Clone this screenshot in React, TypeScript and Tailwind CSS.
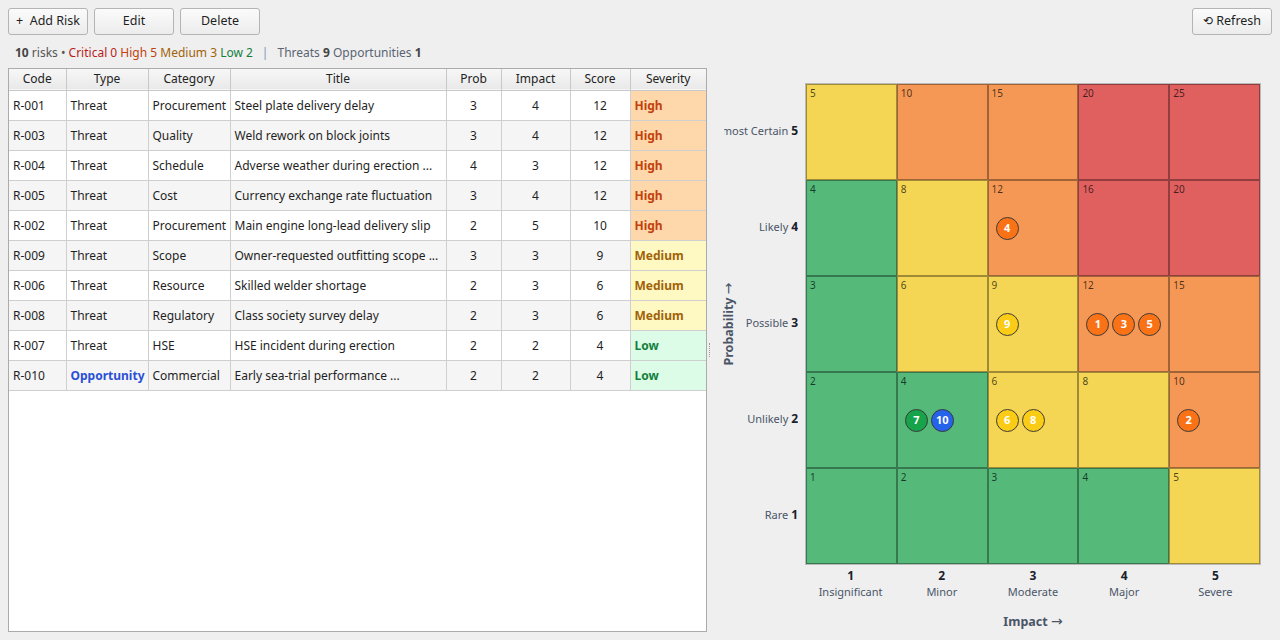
import React from "react";

type Risk = {
  code: string;
  type: "Threat" | "Opportunity";
  category: string;
  title: string;
  prob: number;
  impact: number;
};

const risks: Risk[] = [
  { code: "R-001", type: "Threat", category: "Procurement", title: "Steel plate delivery delay", prob: 3, impact: 4 },
  { code: "R-003", type: "Threat", category: "Quality", title: "Weld rework on block joints", prob: 3, impact: 4 },
  { code: "R-004", type: "Threat", category: "Schedule", title: "Adverse weather during erection ...", prob: 4, impact: 3 },
  { code: "R-005", type: "Threat", category: "Cost", title: "Currency exchange rate fluctuation", prob: 3, impact: 4 },
  { code: "R-002", type: "Threat", category: "Procurement", title: "Main engine long-lead delivery slip", prob: 2, impact: 5 },
  { code: "R-009", type: "Threat", category: "Scope", title: "Owner-requested outfitting scope ...", prob: 3, impact: 3 },
  { code: "R-006", type: "Threat", category: "Resource", title: "Skilled welder shortage", prob: 2, impact: 3 },
  { code: "R-008", type: "Threat", category: "Regulatory", title: "Class society survey delay", prob: 2, impact: 3 },
  { code: "R-007", type: "Threat", category: "HSE", title: "HSE incident during erection", prob: 2, impact: 2 },
  { code: "R-010", type: "Opportunity", category: "Commercial", title: "Early sea-trial performance ...", prob: 2, impact: 2 },
];

const severityOf = (score: number) =>
  score >= 16 ? "Critical" : score >= 10 ? "High" : score >= 5 ? "Medium" : "Low";

const severityCell: Record<string, string> = {
  Critical: "bg-[#fecaca] text-[#b91c1c]",
  High: "bg-[#fed7aa] text-[#c2410c]",
  Medium: "bg-[#fef9c3] text-[#a16207]",
  Low: "bg-[#dcfce7] text-[#15803d]",
};

const zoneFill: Record<string, string> = {
  Critical: "bg-[#e06060]",
  High: "bg-[#f59855]",
  Medium: "bg-[#f4d654]",
  Low: "bg-[#55b97a]",
};

const chipFill: Record<string, string> = {
  Critical: "bg-[#dc2626]",
  High: "bg-[#f97316]",
  Medium: "bg-[#facc15]",
  Low: "bg-[#16a34a]",
};

const probLabels = ["Rare", "Unlikely", "Possible", "Likely", "Almost Certain"];
const impactLabels = ["Insignificant", "Minor", "Moderate", "Major", "Severe"];

const btn =
  "h-[27px] w-[80px] rounded-[3px] border border-[#b4b4b4] bg-gradient-to-b from-[#fbfbfb] to-[#ececec] text-[12.5px] text-[#1f1f1f]";

function Toolbar() {
  return (
    <div className="flex items-center justify-between px-2 pt-2">
      <div className="flex gap-[6px]">
        <button className={`${btn} border-[#4f79a3] from-[#f3f7fb] to-[#e3e9f0]`}>
          +&nbsp; Add Risk
        </button>
        <button className={btn}>Edit</button>
        <button className={btn}>Delete</button>
      </div>
      <button className={btn}>
        <span className="font-['DejaVu_Sans'] text-[12px]">⟲</span> Refresh
      </button>
    </div>
  );
}

function Summary() {
  return (
    <div className="h-[34px] px-[15px] pt-[9px] text-[12px] leading-[18px] text-[#555]">
      <b className="text-[#444]">10</b> risks •{" "}
      <span className="text-[#b91c1c]">Critical 0</span>{" "}
      <span className="text-[#c2410c]">High 5</span>{" "}
      <span className="text-[#a16207]">Medium 3</span>{" "}
      <span className="text-[#15803d]">Low 2</span>
      <span className="mx-[9px] text-[#7b93b0]">|</span>
      <span className="text-[#5a6472]">
        Threats <b className="text-[#444]">9</b> Opportunities <b className="text-[#444]">1</b>
      </span>
    </div>
  );
}

function RiskTable() {
  const th = "h-[21px] border-r border-[#c8c8c8] font-normal text-center text-[#222] last:border-r-0";
  return (
    <div className="w-[699px] overflow-hidden border border-[#ababab] bg-white">
      <table className="w-full table-fixed border-collapse text-[12px] text-[#1f1f1f]">
        <colgroup>
          <col className="w-[57px]" />
          <col className="w-[82px]" />
          <col className="w-[82px]" />
          <col className="w-[216px]" />
          <col className="w-[55px]" />
          <col className="w-[69px]" />
          <col className="w-[60px]" />
          <col className="w-[76px]" />
        </colgroup>
        <thead>
          <tr className="border-b border-[#c8c8c8] bg-gradient-to-b from-[#f7f7f7] to-[#e9e9e9]">
            <th className={th}>Code</th>
            <th className={th}>Type</th>
            <th className={th}>Category</th>
            <th className={th}>Title</th>
            <th className={th}>Prob</th>
            <th className={th}>Impact</th>
            <th className={th}>Score</th>
            <th className={th}>Severity</th>
          </tr>
        </thead>
        <tbody>
          {risks.map((r, i) => {
            const score = r.prob * r.impact;
            const sev = severityOf(score);
            const td = "border-r border-[#cfcfcf] px-[4px] pt-[1px] whitespace-nowrap overflow-hidden";
            return (
              <tr key={r.code} className={`h-[30px] border-b border-[#cfcfcf] ${i % 2 ? "bg-[#f5f5f5]" : "bg-white"}`}>
                <td className={td}>{r.code}</td>
                <td className={`${td} ${r.type === "Opportunity" ? "font-bold text-[#2b4fd6]" : ""}`}>{r.type}</td>
                <td className={td}>{r.category}</td>
                <td className={td}>{r.title}</td>
                <td className={`${td} text-center`}>{r.prob}</td>
                <td className={`${td} text-center`}>{r.impact}</td>
                <td className={`${td} text-center`}>{score}</td>
                <td className={`${td} border-r-0 font-bold ${severityCell[sev]}`}>{sev}</td>
              </tr>
            );
          })}
        </tbody>
      </table>
    </div>
  );
}

function Chip({ risk }: { risk: Risk }) {
  const n = Number(risk.code.slice(2));
  const fill = risk.type === "Opportunity" ? "bg-[#2563eb]" : chipFill[severityOf(risk.prob * risk.impact)];
  return (
    <div
      className={`flex h-[23px] w-[23px] items-center justify-center rounded-full border border-[#3a3a3a] text-[11px] font-bold text-white ${fill}`}
    >
      {n}
    </div>
  );
}

const Arrow = () => <span className="font-['DejaVu_Sans'] text-[14px] font-normal">→</span>;

function Matrix() {
  const rows = [5, 4, 3, 2, 1];
  const cols = [1, 2, 3, 4, 5];
  return (
    <div className="flex flex-1 flex-col pt-[15px]">
      <div className="relative flex">
        <div className="absolute left-[16px] top-1/2 -translate-x-1/2 -translate-y-1/2 -rotate-90 whitespace-nowrap text-[12.5px] font-bold text-[#4a5568]">
          Probability <Arrow />
        </div>
        {/* row labels */}
        <div className="ml-[12px] flex w-[74px] flex-col">
          {rows.map((p) => (
            <div
              key={p}
              className="flex h-[96px] items-center justify-end overflow-hidden whitespace-nowrap text-[11px] text-[#4a5568]"
            >
              <span className="shrink-0">
                {probLabels[p - 1]} <b className="text-[12px] text-[#1a202c]">{p}</b>
              </span>
            </div>
          ))}
        </div>
        {/* heat map */}
        <div className="ml-[7px] grid w-[456px] grid-cols-5 border border-[#b9b9b9]">
          {rows.map((p) =>
            cols.map((im) => {
              const score = p * im;
              const here = risks
                .filter((r) => r.prob === p && r.impact === im)
                .sort((a, b) => Number(a.code.slice(2)) - Number(b.code.slice(2)));
              return (
                <div
                  key={`${p}-${im}`}
                  className={`relative flex h-[96px] items-center gap-[3px] border border-[rgba(0,0,0,0.35)] px-[7px] ${zoneFill[severityOf(score)]}`}
                >
                  <span className="absolute left-[3px] top-[1px] text-[10px] text-[rgba(0,0,0,0.7)]">{score}</span>
                  {here.map((r) => (
                    <Chip key={r.code} risk={r} />
                  ))}
                </div>
              );
            })
          )}
        </div>
      </div>
      {/* impact axis */}
      <div className="ml-[93px] mt-[3px] grid w-[456px] grid-cols-5">
        {cols.map((im) => (
          <div key={im} className="flex flex-col items-center leading-[16px]">
            <b className="text-[12px] text-[#1a202c]">{im}</b>
            <span className="text-[11px] text-[#4a5568]">{impactLabels[im - 1]}</span>
          </div>
        ))}
      </div>
      <div className="ml-[93px] mt-[11px] w-[456px] text-center text-[12.5px] font-bold text-[#4a5568]">
        Impact <Arrow />
      </div>
    </div>
  );
}

export default function App() {
  return (
    <div className="flex h-[640px] w-[1280px] flex-col overflow-hidden bg-[#efefef] font-['Noto_Sans',sans-serif]">
      <Toolbar />
      <Summary />
      <div className="flex flex-1 pb-[8px] pl-[8px] pt-[2px]">
        <RiskTable />
        <div className="flex w-[5px] items-center justify-center">
          <div className="h-[14px] border-l border-dotted border-[#9a9a9a]" />
        </div>
        <Matrix />
      </div>
    </div>
  );
}
